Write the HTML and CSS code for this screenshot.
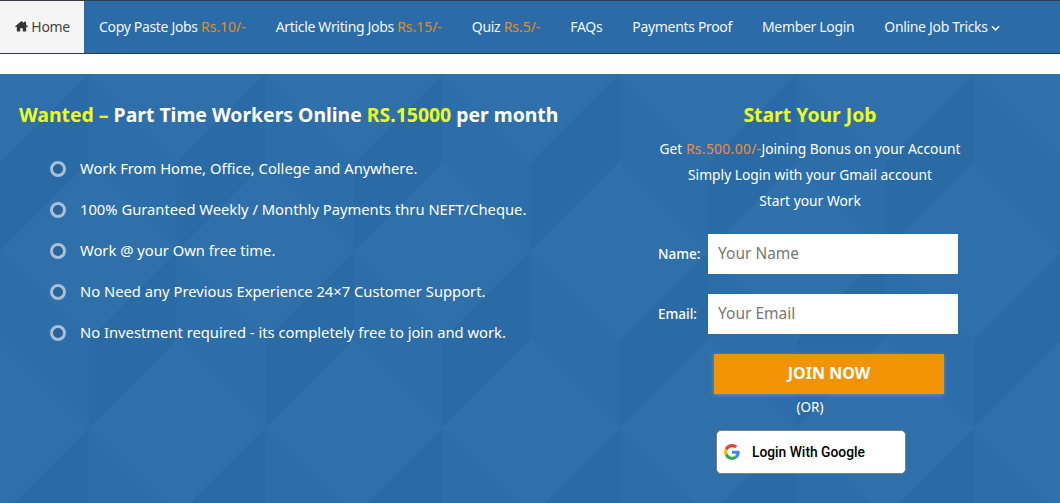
FILE: index.html
```html
<!DOCTYPE html>
<html>
<head>
  <title>Part Time Workers Online</title>
  <link rel="stylesheet" href="styles.css">
</head>
<body>
  <!-- Top navigation -->
  <nav class="navbar">
    <a class="nav-link active" href="#"><svg class="home-icon" viewBox="0 0 24 20"><path d="M12 3.2 3.4 10.3v7.9c0 .5.4.8.8.8h5.4v-5.6h4.8V19h5.4c.4 0 .8-.3.8-.8v-7.9L12 3.2zM23.6 9.4 20.4 6.700V1.500c0-.3-.2-.5-.5-.5h-2.800c-.3 0-.5.2-.5.5v2L13.200.6c-.7-.6-1.700-.6-2.400 0L.4 9.400c-.2.200-.2.500 0 .7l.9 1.100c.2.200.5.200.7.100L12 2.900l10 8.400c.2.100.5.100.7-.1l.9-1.100c.2-.2.200-.5 0-.7z"/></svg> Home</a>
    <a class="nav-link" href="#">Copy Paste Jobs <span class="price">Rs.10/-</span></a>
    <a class="nav-link" href="#">Article Writing Jobs <span class="price">Rs.15/-</span></a>
    <a class="nav-link" href="#">Quiz <span class="price">Rs.5/-</span></a>
    <a class="nav-link" href="#">FAQs</a>
    <a class="nav-link" href="#">Payments Proof</a>
    <a class="nav-link" href="#">Member Login</a>
    <a class="nav-link" href="#">Online Job Tricks <svg class="caret" viewBox="0 0 10 6"><path d="M1 1l4 4 4-4" fill="none" stroke="currentColor" stroke-width="1.700"/></svg></a>
  </nav>

  <section class="hero">
    <!-- Left side -->
    <div class="hero-left">
      <h2 class="hero-title"><span class="yellow">Wanted &ndash;</span> Part Time Workers Online <span class="yellow">RS.15000</span> per month</h2>
      <ul class="points">
        <li><span class="ring"></span>Work From Home, Office, College and Anywhere.</li>
        <li><span class="ring"></span>100% Guranteed Weekly / Monthly Payments thru NEFT/Cheque.</li>
        <li><span class="ring"></span>Work @ your Own free time.</li>
        <li><span class="ring"></span>No Need any Previous Experience 24&times;7 Customer Support.</li>
        <li><span class="ring"></span>No Investment required - its completely free to join and work.</li>
      </ul>
    </div>

    <!-- Join form -->
    <div class="hero-right">
      <h2 class="form-title yellow">Start Your Job</h2>
      <p class="intro">Get <span class="bonus">Rs.500.00/-</span>Joining Bonus on your Account</p>
      <p class="intro">Simply Login with your Gmail account</p>
      <p class="intro">Start your Work</p>
      <form class="join-form">
        <div class="form-group">
          <label for="name">Name:</label>
          <input type="text" id="name" placeholder="Your Name">
        </div>
        <div class="form-group">
          <label for="email">Email:</label>
          <input type="email" id="email" placeholder="Your Email">
        </div>
        <button class="join-btn" type="button">JOIN NOW</button>
        <div class="or">(OR)</div>
        <a class="google-btn" href="#">
          <svg class="g-logo" viewBox="0 0 48 48">
            <path fill="#EA4335" d="M24 9.500c3.500 0 6.700 1.200 9.200 3.600l6.900-6.900C35.900 2.400 30.500 0 24 0 14.600 0 6.500 5.400 2.600 13.200l8 6.200C12.500 13.700 17.800 9.500 24 9.500z"/>
            <path fill="#4285F4" d="M46.980 24.550c0-1.570-.15-3.090-.38-4.550H24v9.020h12.940c-.58 2.960-2.260 5.480-4.780 7.180l7.730 6c4.510-4.180 7.090-10.360 7.090-17.650z"/>
            <path fill="#FBBC05" d="M10.530 28.590c-.48-1.450-.76-2.990-.76-4.590s.27-3.140.76-4.590l-7.980-6.190C.92 16.460 0 20.120 0 24c0 3.880.92 7.540 2.560 10.780l7.970-6.190z"/>
            <path fill="#34A853" d="M24 48c6.480 0 11.930-2.130 15.890-5.810l-7.730-6c-2.150 1.450-4.920 2.300-8.160 2.300-6.260 0-11.570-4.220-13.470-9.910l-7.980 6.190C6.510 42.620 14.620 48 24 48z"/>
          </svg>
          Login With Google
        </a>
      </form>
    </div>
  </section>
</body>
</html>
```

FILE: styles.css
```css
* {
  box-sizing: border-box;
}
body {
  margin: 0;
  background: #fff;
  font-family: "Noto Sans", "Open Sans", sans-serif;
  color: #fff;
}

/* navbar */
.navbar {
  display: flex;
  height: 54px;
  background: #2a6ba8;
  border-top: 1px solid #2f3b47;
  border-bottom: 1px solid #2f3b47;
}
.nav-link {
  display: block;
  padding: 0 15px;
  color: #f2f6fa;
  font-size: 14px;
  letter-spacing: -0.33px;
  line-height: 52px;
  text-decoration: none;
  white-space: nowrap;
}
.nav-link.active {
  width: 84px;
  background: #f5f5f5;
  color: #444;
  letter-spacing: -0.3px;
}
.home-icon {
  width: 13px;
  height: 11px;
  fill: #333;
}
.price {
  color: #e08e24;
  letter-spacing: -0.03px;
}
.caret {
  width: 9px;
  height: 6px;
  vertical-align: 1px;
}

/* hero */
.hero {
  display: flex;
  height: 429px;
  margin-top: 20px;
  background-color: #2b6ea9;
  background-image: url("data:image/svg+xml,%3Csvg xmlns='http://www.w3.org/2000/svg' width='177' height='354'%3E%3Cpath d='M0 0h88.500v177H0zM88.500 177H177v177H88.500z' fill='%232a6ba6'/%3E%3Cpath d='M0-88.500 88.500 0 0 88.500-88.500 0zM177-88.500 265.500 0 177 88.500 88.500 0zM88.500 88.500 177 177 88.500 265.500 0 177zM0 265.500 88.500 354 0 442.500-88.500 354zM177 265.500 265.500 354 177 442.500 88.500 354z' fill='%232f70ab'/%3E%3C/svg%3E");
}
.yellow {
  color: #eaff1e;
}
.hero-left {
  width: 600px;
  padding: 28px 0 0 19px;
}
.hero-title {
  margin: 0;
  font-size: 19.400px;
  line-height: 26px;
  font-weight: 700;
}
.points {
  list-style: none;
  margin: 19px 0 0;
  padding: 0 0 0 31px;
}
.points li {
  display: flex;
  align-items: center;
  gap: 14px;
  height: 41px;
  font-size: 14.750px;
  white-space: nowrap;
}
.ring {
  width: 16px;
  height: 16px;
  margin-top: 2px;
  border: 3px solid #a5c0da;
  border-radius: 50%;
  background: #2d6291;
}

/* right side */
.hero-right {
  width: 420px;
  padding-top: 28px;
  text-align: center;
}
.form-title {
  margin: 0 0 8px;
  font-size: 19.400px;
  line-height: 26px;
  font-weight: 700;
}
.intro {
  margin: 0;
  font-size: 13.800px;
  line-height: 26px;
}
.bonus {
  color: #ee8f3c;
  letter-spacing: 0.35px;
}
.join-form {
  margin-top: 20px;
}
.form-group {
  display: flex;
  align-items: center;
  height: 40px;
  margin-bottom: 20px;
  padding-left: 58px;
  text-align: left;
}
.form-group label {
  width: 50px;
  font-size: 13.500px;
  font-weight: 500;
}
.form-group input {
  width: 250px;
  height: 40px;
  padding: 0 10px 2px;
  border: none;
  border-radius: 0;
  background: #fff;
  font-family: inherit;
  font-size: 15.500px;
}
.form-group input::placeholder {
  color: #777;
}
.join-btn {
  display: block;
  width: 230px;
  height: 40px;
  margin-left: 114px;
  padding: 0 0 2px;
  border: none;
  background: #f09405;
  box-shadow: 0 1px 4px rgba(255, 255, 255, 0.25);
  color: #fff;
  font-family: inherit;
  font-size: 16px;
  font-weight: 700;
}
.or {
  margin-top: 3px;
  font-size: 13.500px;
  line-height: 20px;
}
.google-btn {
  display: flex;
  align-items: center;
  gap: 12px;
  width: 190px;
  height: 44px;
  margin: 13px 0 0 116px;
  padding-left: 7px;
  border: 1px solid #7f7f7f;
  border-radius: 5px;
  background: #fff;
  color: #000;
  font-family: Roboto, sans-serif;
  font-size: 13.800px;
  font-weight: 500;
  text-decoration: none;
}
.g-logo {
  width: 16px;
  height: 16px;
}
```
